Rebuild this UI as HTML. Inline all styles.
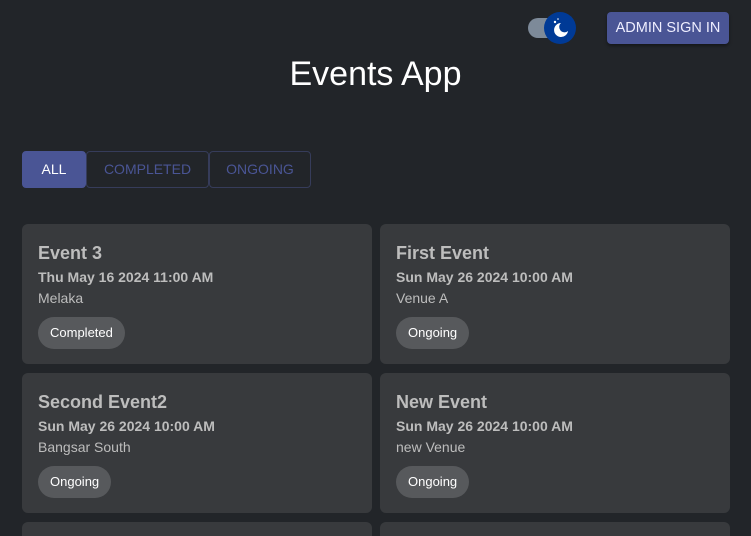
<!DOCTYPE html>
<html><head><style>
*{box-sizing:border-box;margin:0;padding:0}
html,body{width:751px;height:536px;overflow:hidden}
body{background:#222529;font-family:"Liberation Sans",sans-serif;position:relative}
.tog{position:absolute;left:528px;top:18px;width:34px;height:20px;border-radius:10px;background:#7d8a99}
.knob{position:absolute;left:544px;top:12px;width:32px;height:32px;border-radius:50%;background:#003a96}
.btn{position:absolute;left:607px;top:12px;width:122px;height:32px;background:#4a5595;border-radius:4px;color:#eef;font-size:14.5px;line-height:32px;text-align:center;box-shadow:0 2px 3px rgba(0,0,0,.4)}
h1{position:absolute;top:55px;width:751px;text-align:center;color:#fff;font-weight:400;font-size:34px}
.tabs{position:absolute;left:22px;top:151px;display:flex;height:37px}
.tab{border:1px solid #363c5a;color:#4a5595;font-size:14px;line-height:35px;text-align:center;border-radius:4px}
.card{position:absolute;width:350px;height:140px;background:#383a3d;border-radius:6px;padding:19px 16px;color:#bdbdbd;overflow:hidden}
.card h2{font-size:18px;font-weight:700;margin-top:0}
.card .d{font-size:14px;font-weight:700;margin-top:5px}
.card .v{font-size:14px;margin-top:5px}
.chip{display:inline-block;margin-top:11px;height:32px;line-height:32px;padding:0 12px;border-radius:16px;background:#57595c;color:#fff;font-size:13px}
</style></head><body>
<div class="tog"></div>
<div class="knob"><svg width="32" height="32" viewBox="0 0 32 32"><path d="M17 11a7 7 0 1 0 7 8a5 5 0 0 1-7-8z" fill="#fff"/><circle cx="11" cy="10" r="1.2" fill="#fff"/><circle cx="14" cy="7" r="0.8" fill="#fff"/></svg></div>
<div class="btn">ADMIN SIGN IN</div>
<h1>Events App</h1>
<div class="tabs">
<div class="tab" style="width:64px;background:#4a5595;color:#fff;border-color:#4a5595">ALL</div>
<div class="tab" style="width:123px">COMPLETED</div>
<div class="tab" style="width:102px">ONGOING</div>
</div>
<div class="card" style="left:22px;top:224px"><h2>Event 3</h2><div class="d">Thu May 16 2024 11:00 AM</div><div class="v">Melaka</div><div class="chip">Completed</div></div>
<div class="card" style="left:380px;top:224px"><h2>First Event</h2><div class="d">Sun May 26 2024 10:00 AM</div><div class="v">Venue A</div><div class="chip">Ongoing</div></div>
<div class="card" style="left:22px;top:373px"><h2>Second Event2</h2><div class="d">Sun May 26 2024 10:00 AM</div><div class="v">Bangsar South</div><div class="chip">Ongoing</div></div>
<div class="card" style="left:380px;top:373px"><h2>New Event</h2><div class="d">Sun May 26 2024 10:00 AM</div><div class="v">new Venue</div><div class="chip">Ongoing</div></div>
<div class="card" style="left:22px;top:522px;height:14px"></div>
<div class="card" style="left:380px;top:522px;height:14px"></div>
</body></html>
